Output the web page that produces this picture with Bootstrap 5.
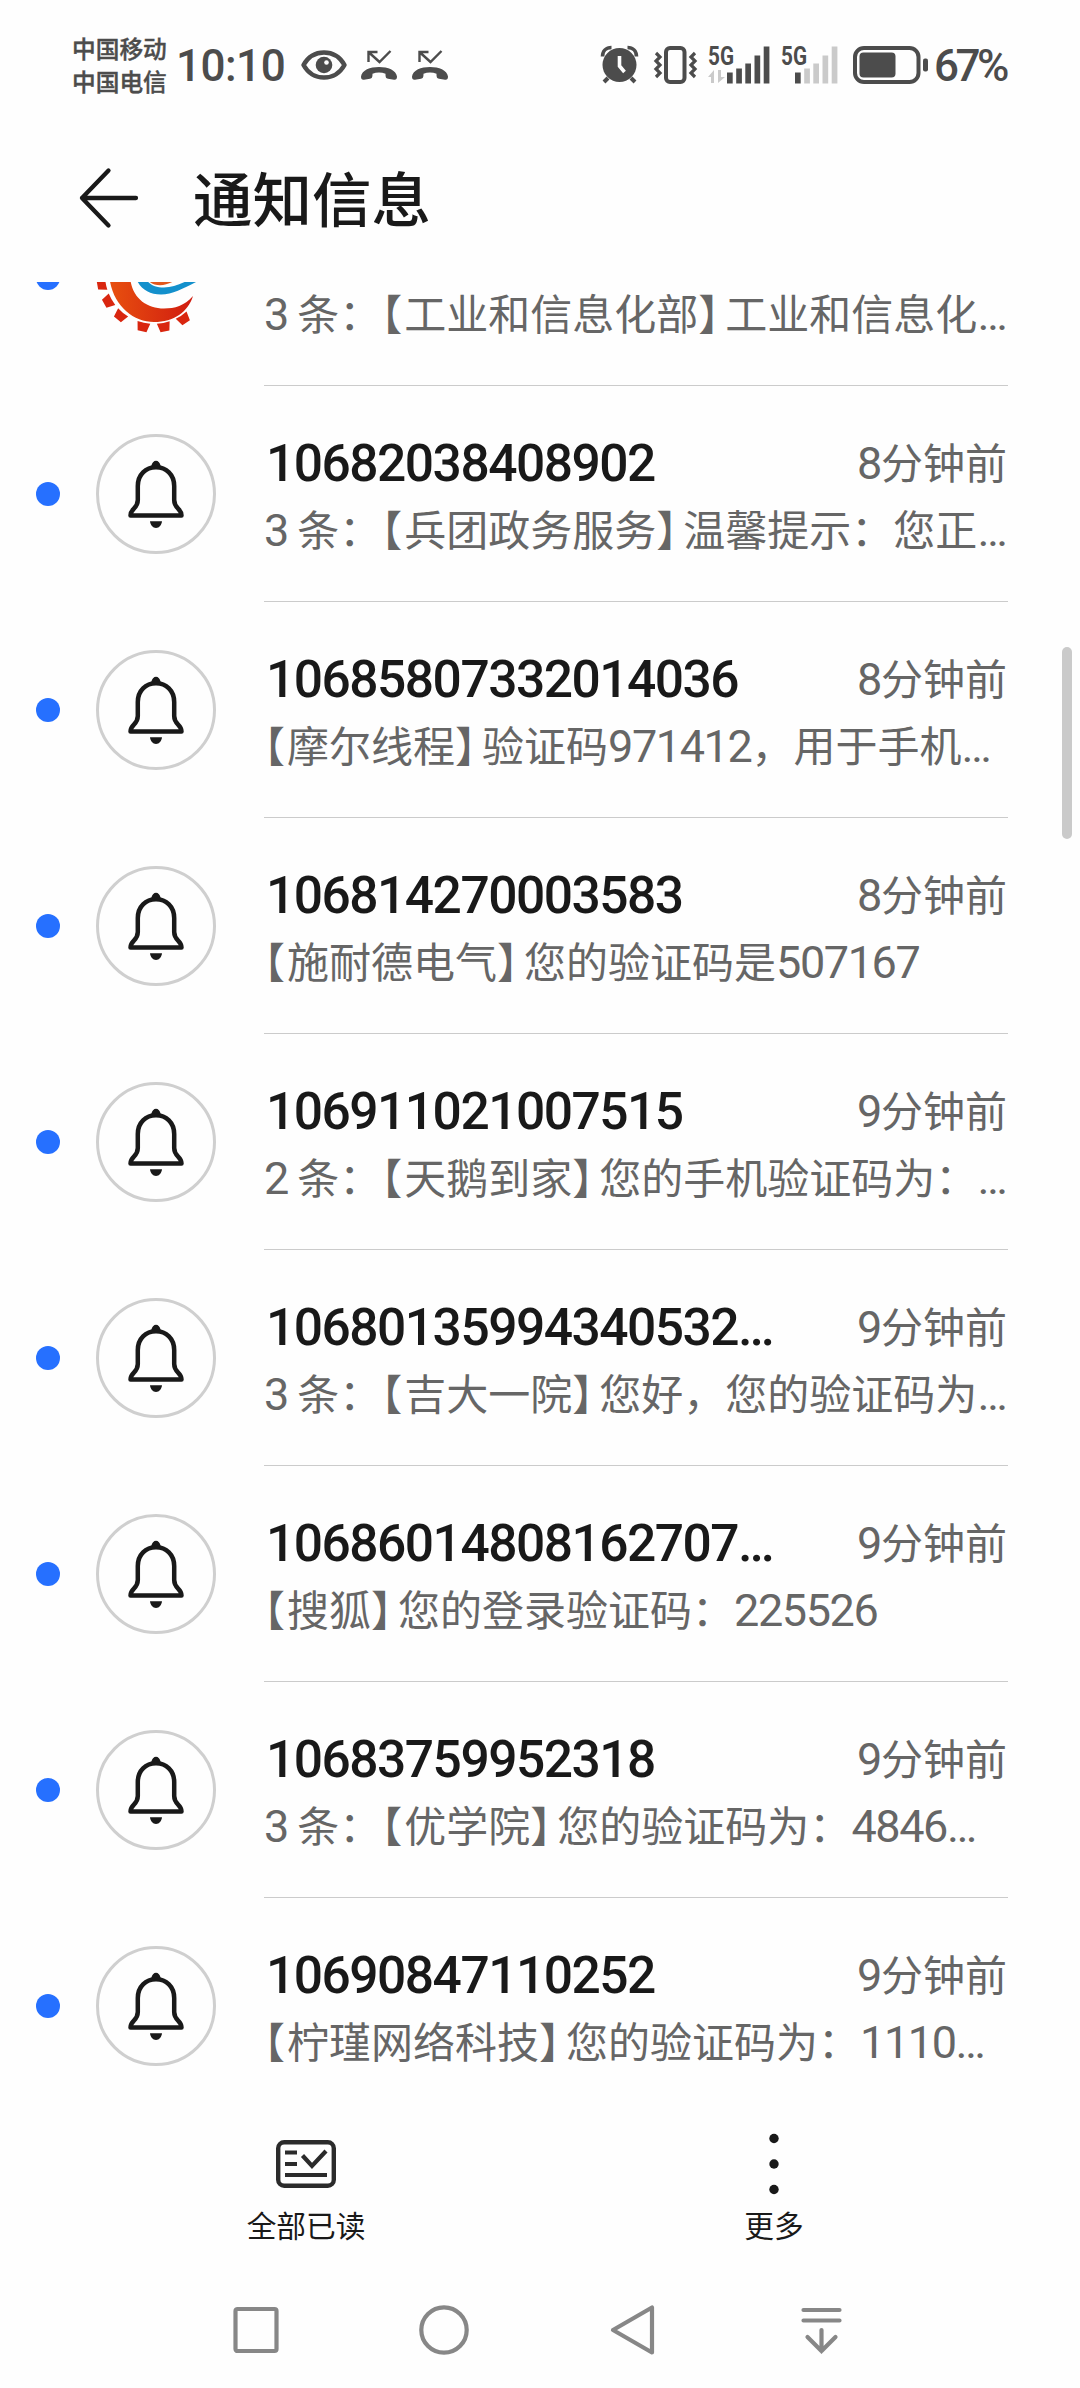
<!DOCTYPE html>
<html lang="zh-CN">
<head>
<meta charset="utf-8">
<meta name="viewport" content="width=device-width, initial-scale=1">
<title>通知信息</title>
<link href="https://cdn.jsdelivr.net/npm/bootstrap@5.3.0/dist/css/bootstrap.min.css" rel="stylesheet">
<style>
body{background:#fefefe;color:#191919;font-family:Roboto,"Noto Sans CJK SC",sans-serif;width:1080px;height:2388px;overflow:hidden}
svg{display:block;flex:none;overflow:visible}
.phone{height:2388px}
.status{height:126px;color:#4c4c4c;padding:3px 72px 0 72px}
.carrier{font:500 23.7px/33px "Noto Sans CJK SC",sans-serif;width:104px;-webkit-text-stroke:.4px #4c4c4c}
.clock{font-size:44px;font-weight:500;line-height:50px;letter-spacing:-.5px;width:125px;padding-top:3px}
.power{font-size:44px;font-weight:500;line-height:50px;letter-spacing:-3.500px;width:74px;padding-top:2px}
.topbar{height:156px;padding:0 72px 12px 79px}
.topbar h1{font:500 59.5px/80px "Noto Sans CJK SC",sans-serif;margin:0 0 5px 53px}
.inbox{height:1824px;overflow:hidden}
.inbox-inner{margin-top:-112px}
.msg{height:216px;padding:0 72px 0 36px}
.dot{width:24px;height:24px;background:#2670ff;flex:none}
.ring{width:120px;height:120px;border:3px solid #cfcfcf;margin-left:36px;flex:none}
.seal{width:120px;height:120px;margin-left:36px;flex:none}
.info{margin-left:48px;height:216px;border-bottom:1px solid #cbcbcb;padding-top:44px;min-width:0}
.msg:last-child .info{border-color:transparent}
.num{font-size:51.5px;font-weight:500;line-height:62px;letter-spacing:-1.500px;padding:3px 0 0 2px;height:62px;white-space:nowrap}
.ago,.txt{font-family:"Noto Sans CJK SC",sans-serif;font-size:42px;color:#666;white-space:nowrap;font-weight:400}
.ago{line-height:62px;margin-right:1px}
.txt{line-height:62px;margin-top:5px}
.ago i,.txt i{font:400 45px/1 Roboto,sans-serif;letter-spacing:-1.400px}
.half{font-feature-settings:"halt"}
.lb{margin-right:2px}
.rb{margin-right:6px}
.thumb{width:10px;height:192px;left:1061.500px;top:647px;background:#cacaca}
.tools{height:176px;padding:0 72px;font:400 29.7px/40px "Noto Sans CJK SC",sans-serif}
.tools svg{margin-top:27px}
.tools span{margin-top:10px}
.softkeys{flex:1;padding:0 165px 10px 162px}
.softkeys svg{margin:0 auto}
</style>
</head>
<body>
<svg width="0" height="0" class="position-absolute">
<defs>
<symbol id="bell" viewBox="0 0 114 114"><path d="M57 23.800c2 0 4.300 2 4.700 5.700h-9.400c.4-3.700 2.700-5.700 4.700-5.700Z" fill="#191919"/><path d="M38.800 49c0-11.500 8-18.700 18.200-18.700S75.200 37.500 75.200 49v14c0 9 7.300 8 7.300 15.500H31.500c0-7.500 7.300-6.500 7.300-15.500Z" fill="none" stroke="#191919" stroke-width="4.500" stroke-linejoin="round"/><path d="M51 84.300h12c-.5 4-3 6.700-6 6.700s-5.500-2.700-6-6.700Z" fill="#191919"/></symbol>
<symbol id="missed" viewBox="0 0 36 30"><path d="M7.500 12V2h9M7.500 2l11 10L29.500 1" fill="none" stroke="currentColor" stroke-width="2.400"/><path d="M0 26.500C1 20 9 17 18 17s17 3 18 9.500c0 2.500-1 3.500-3 3.200l-6-1c-2-.4-2.500-1.500-2.500-5-4-1.500-9-1.500-13 0 0 3.500-.5 4.600-2.500 5l-6 1c-2 .3-3-.7-3-3.200Z" fill="currentColor"/></symbol>
<linearGradient id="flame" x1="0" y1="0" x2="1" y2="0"><stop offset="0" stop-color="#e8500f"/><stop offset="1" stop-color="#d01c10"/></linearGradient>
</defs>
</svg>
<div class="phone d-flex flex-column position-relative">
<header class="status d-flex align-items-center">
<div class="carrier">中国移动<br>中国电信</div>
<div class="clock">10:10</div>
<svg width="46" height="30" viewBox="0 0 46 30"><path d="M2.500 15C7 7 14.500 2.500 23 2.500S39 7 43.500 15C39 23 31.500 27.500 23 27.500S7 23 2.500 15Z" fill="none" stroke="currentColor" stroke-width="4.500" stroke-linejoin="round"/><circle cx="23" cy="15" r="8.300" fill="currentColor"/><circle cx="25.500" cy="12.500" r="2.300" fill="#fefefe"/></svg>
<svg width="36" height="30" style="margin-left:14px"><use href="#missed"/></svg>
<svg width="36" height="30" style="margin-left:15px"><use href="#missed"/></svg>
<div class="ms-auto d-flex align-items-center">
<svg width="37" height="38" viewBox="0 0 37 38"><circle cx="18.500" cy="19" r="17" fill="currentColor"/><path d="M1.500 10.500C1.500 5 5 1.500 10.500 1.500M35.500 10.500C35.500 5 32 1.500 26.500 1.500" stroke="currentColor" stroke-width="3.600" fill="none"/><path d="M7 32l-4 4M30 32l4 4" stroke="currentColor" stroke-width="4" fill="none"/><path d="M18.500 10v10l5 6" stroke="#fefefe" stroke-width="3.600" fill="none"/></svg>
<svg width="43" height="38" viewBox="0 0 43 38" style="margin-left:16px"><rect x="12" y="2" width="18.500" height="34" rx="4" fill="none" stroke="currentColor" stroke-width="4"/><path d="M2 7l4 4-4 4 4 4-4 4 4 4-4 4M41 7l-4 4 4 4-4 4 4 4-4 4 4 4" fill="none" stroke="currentColor" stroke-width="3.200"/></svg>
<svg width="62" height="38" viewBox="0 0 62 38" style="margin-left:11px"><text x="0" y="18.500" font-family="Roboto" font-weight="700" font-size="25" textLength="26" lengthAdjust="spacingAndGlyphs" fill="currentColor">5G</text><path d="M0 31l6-7v13h-3v-6ZM10 24v13l7-6h-4v-7Z" fill="#cacaca"/><path d="M19 26.500h5.700v11H19ZM28.200 22.500h5.700v15h-5.700ZM37.300 17.500H43v20h-5.700ZM46.500 9.500h5.700v28h-5.700ZM55.700.500h5.700v37h-5.700Z" fill="currentColor"/></svg>
<svg width="57" height="38" viewBox="0 0 57 38" style="margin-left:11px"><text x="0" y="18.500" font-family="Roboto" font-weight="700" font-size="25" textLength="26" lengthAdjust="spacingAndGlyphs" fill="currentColor">5G</text><path d="M14 26.500h5.700v11H14Z" fill="currentColor"/><path d="M23.200 22.500h5.700v15h-5.700ZM32.300 17.500H38v20h-5.700ZM41.500 9.500h5.700v28h-5.700ZM50.700.500h5.700v37h-5.700Z" fill="#cacaca"/></svg>
<svg width="76" height="38" viewBox="0 0 76 38" style="margin-left:15px"><rect x="2" y="2" width="63.500" height="34" rx="9" fill="none" stroke="currentColor" stroke-width="4"/><rect x="6.500" y="6.500" width="36" height="25" rx="4" fill="currentColor"/><rect x="70" y="12.500" width="5" height="13" rx="2" fill="currentColor"/></svg>
<div class="power" style="margin-left:5px">67%</div>
</div>
</header>
<div class="topbar d-flex align-items-center">
<svg width="61" height="60" viewBox="0 0 61 60"><path d="M29.500 2.500 3 30l26.500 27.500M3 30h54" fill="none" stroke="#191919" stroke-width="4.300" stroke-linecap="round" stroke-linejoin="round"/></svg>
<h1>通知信息</h1>
</div>
<main class="inbox"><div class="inbox-inner" id="list"></div></main>
<div class="thumb position-absolute rounded-pill"></div>
<nav class="tools d-flex text-center">
<div class="w-50 d-flex flex-column align-items-center"><svg width="60" height="62" viewBox="0 0 60 62"><rect x="2.200" y="9.200" width="55.600" height="43.600" rx="6" fill="none" stroke="#2b2b2b" stroke-width="4.400"/><path d="M9 19.500h12M9 31h12M9 42h42M26.500 22.500 36 33l14-15" fill="none" stroke="#2b2b2b" stroke-width="4.200"/></svg><span>全部已读</span></div>
<div class="w-50 d-flex flex-column align-items-center"><svg width="60" height="62" viewBox="0 0 60 62" fill="#191919"><circle cx="30" cy="5.500" r="4.700"/><circle cx="30" cy="31" r="4.700"/><circle cx="30" cy="56.500" r="4.700"/></svg><span>更多</span></div>
</nav>
<footer class="softkeys d-flex align-items-center">
<div class="col"><svg width="52" height="52" fill="none" stroke="#878787" stroke-width="4.200"><rect x="5.500" y="5" width="41" height="42" rx="2"/></svg></div>
<div class="col"><svg width="52" height="52" fill="none" stroke="#878787" stroke-width="4.200"><circle cx="26" cy="26" r="22.700"/></svg></div>
<div class="col"><svg width="52" height="52" fill="none" stroke="#878787" stroke-width="4.200" stroke-linejoin="round"><path d="M45 3.500v45L6 26Z"/></svg></div>
<div class="col"><svg width="52" height="52" fill="none" stroke="#878787" stroke-width="4.200" stroke-linecap="round"><path d="M8.500 6h36M8.500 16.500h36M26.500 26v21M12.500 33l14 14 14-14"/></svg></div>
</footer>
</div>
<script>
const rows=[
["","","3 条：【工业和信息化部】工业和信息化…"],
["10682038408902","8","3 条：【兵团政务服务】温馨提示：您正…"],
["10685807332014036","8","【摩尔线程】验证码971412，用于手机…"],
["106814270003583","8","【施耐德电气】您的验证码是507167"],
["106911021007515","9","2 条：【天鹅到家】您的手机验证码为：…"],
["10680135994340532…","9","3 条：【吉大一院】您好，您的验证码为…"],
["10686014808162707…","9","【搜狐】您的登录验证码：225526"],
["10683759952318","9","3 条：【优学院】您的验证码为：4846…"],
["10690847110252","9","【柠瑾网络科技】您的验证码为：1110…"]];
const fmt=s=>s.replace(/[0-9…]+/g,'<i>$&</i>').replace(/【/g,'<span class="half lb">【</span>').replace(/】/g,'<span class="half rb">】</span>');
// gear teeth are placed by rotating one tooth around the wheel's centre
const teeth=[80,60,39.5,12,-11,-34].map(a=>`<path transform="translate(58 57) rotate(${a})" d="M-6.500 48.500Q0 49.500 6.500 48.500L4.500 57.500h-9Z"/>`).join('');
const seal=`<svg class="seal" viewBox="0 0 120 120"><g fill="#d9260f">${teeth}</g><path d="M13 52C13 84 35 104 58 104c20 0 34-10 39-26-9 10-18 12.500-29 12.500C49 90.500 34 78 34 56Z" fill="url(#flame)"/><path d="M40 60c4 11 13 16.500 25 16.500S88 70 102 63l-2-4c-14 6-22 10.500-32 10.500S52 66 48 58Z" fill="#1390cc"/><path d="M50 60c6 9 18 9 28 3l-4-5Z" fill="#e2571c"/></svg>`;
const bell='<div class="ring rounded-circle"><svg width="114" height="114"><use href="#bell"/></svg></div>';
document.getElementById('list').innerHTML=rows.map(([num,min,txt],i)=>`<div class="msg d-flex align-items-center"><span class="dot rounded-circle"></span>${i?bell:seal}<div class="info flex-grow-1"><div class="d-flex justify-content-between"><div class="num">${num}</div>${min?`<div class="ago"><i>${min}</i>分钟前</div>`:''}</div><div class="txt">${fmt(txt)}</div></div></div>`).join('');
</script>
<script src="https://cdn.jsdelivr.net/npm/bootstrap@5.3.0/dist/js/bootstrap.bundle.min.js"></script>
</body>
</html>
